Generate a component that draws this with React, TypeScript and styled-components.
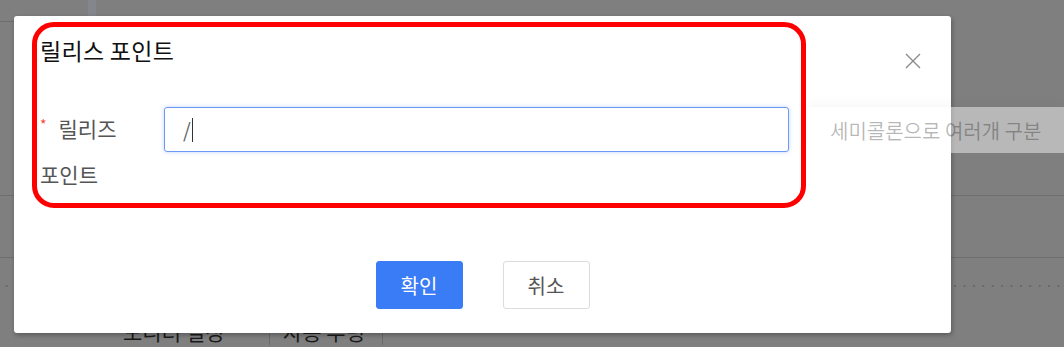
import { FunctionComponent } from "react";
import styled, { createGlobalStyle } from "styled-components";

const GlobalStyle = createGlobalStyle`
  html, body {
    margin: 0;
    padding: 0;
    background: #7f7f7f;
  }
  body {
    font-family: "Noto Sans CJK KR", "Noto Sans", sans-serif;
  }
`;

const App: FunctionComponent = () => {
  return (
    <>
      <GlobalStyle />
      <Screen>
        <BackPage>
          <TopRow>
            <TopLeftCell />
            <TopDivider />
          </TopRow>
          <Rule $top={173} />
          <Rule $top={61} />
          <DottedRule />
          <BottomTabs>
            <BottomTab $width={160}>모니터 설정</BottomTab>
            <BottomTab $width={113}>자동 부팅</BottomTab>
          </BottomTabs>
        </BackPage>

        <Dialog>
          <Header>
            <Title>릴리스 포인트</Title>
            <CloseButton aria-label="닫기">
              <svg width="16" height="16" viewBox="0 0 16 16">
                <path d="M1 1 L15 15 M15 1 L1 15" stroke="#8a8a8a" strokeWidth="1.4" fill="none" />
              </svg>
            </CloseButton>
          </Header>

          <FormRow>
            <Label>
              <Required>*</Required>릴리즈 포인트
            </Label>
            <InputBox>
              /<Caret />
            </InputBox>
            <Hint>세미콜론으로 여러개 구분</Hint>
          </FormRow>

          <Footer>
            <Button $primary>확인</Button>
            <Button>취소</Button>
          </Footer>

          <Highlight />
        </Dialog>
      </Screen>
    </>
  );
};

const Screen = styled.div`
  position: relative;
  width: 1064px;
  height: 347px;
  overflow: hidden;
  background: #7f7f7f;
`;

const BackPage = styled.div`
  display: flex;
  flex-direction: column;
`;

const TopRow = styled.div`
  display: flex;
  height: 22px;
`;

const TopLeftCell = styled.div`
  width: 88px;
  border-bottom: 1px solid #6e6e6e;
`;

const TopDivider = styled.div`
  width: 8px;
  background: #83878d;
`;

const Rule = styled.div<{ $top: number }>`
  margin-top: ${p => p.$top}px;
  border-top: 1px solid #6f6f6f;
`;

const DottedRule = styled.div`
  margin-top: 27px;
  height: 2px;
  background-image: radial-gradient(circle, #696969 1px, transparent 1.2px);
  background-size: 9.4px 2px;
  background-position: 2px 0;
`;

const BottomTabs = styled.div`
  display: flex;
  margin-top: 30px;
  padding-left: 110px;
`;

const BottomTab = styled.div<{ $width: number }>`
  width: ${p => p.$width}px;
  padding-left: 13px;
  box-sizing: border-box;
  font-size: 21px;
  line-height: 28px;
  color: #1a1a1a;
  border-right: 1px solid #6a6a6a;
  white-space: nowrap;
`;

const Dialog = styled.div`
  position: absolute;
  left: 14px;
  top: 16px;
  width: 937px;
  height: 317px;
  box-sizing: border-box;
  background: #ffffff;
  border-radius: 3px;
  box-shadow: 1px 2px 5px rgba(0, 0, 0, 0.3);
  padding: 20px 30px 24px 26px;
  display: flex;
  flex-direction: column;
`;

const Header = styled.div`
  display: flex;
  justify-content: space-between;
  align-items: flex-start;
  height: 28px;
`;

const Title = styled.div`
  font-size: 23px;
  line-height: 28px;
  color: #111111;
  font-weight: 400;
  letter-spacing: 0.3px;
`;

const CloseButton = styled.div`
  width: 16px;
  height: 16px;
  margin-top: 17px;
  display: flex;
`;

const FormRow = styled.div`
  display: flex;
  align-items: flex-start;
  margin-top: 41px;
  width: 1024px;
  flex-shrink: 0;
`;

const Label = styled.div`
  width: 124px;
  padding-right: 14px;
  box-sizing: border-box;
  flex-shrink: 0;
  font-size: 21px;
  line-height: 46px;
  color: #555555;
  word-break: keep-all;
`;

const Required = styled.span`
  display: inline-block;
  color: #f5483b;
  font-size: 14px;
  line-height: 14px;
  margin-right: 12px;
  vertical-align: top;
  margin-top: 12px;
`;

const InputBox = styled.div`
  width: 625px;
  height: 45px;
  margin-top: 2px;
  flex-shrink: 0;
  box-sizing: border-box;
  border: 1px solid #6a9af3;
  border-radius: 3px;
  box-shadow: 0 0 4px rgba(80, 130, 240, 0.35);
  padding-left: 18px;
  display: flex;
  align-items: center;
  font-size: 20px;
  color: #666666;
`;

const Caret = styled.span`
  display: inline-block;
  width: 1px;
  height: 24px;
  margin-left: 1px;
  background: #333333;
`;

const Hint = styled.div`
  margin-left: 19px;
  margin-top: 2px;
  width: 256px;
  height: 46px;
  flex-shrink: 0;
  box-sizing: border-box;
  padding-left: 22px;
  display: flex;
  align-items: center;
  background: rgba(255, 255, 255, 0.45);
  box-shadow: 0 -6px 8px rgba(0, 0, 0, 0.025);
  font-size: 20px;
  color: rgba(0, 0, 0, 0.28);
  white-space: nowrap;
`;

const Footer = styled.div`
  display: flex;
  justify-content: center;
  gap: 40px;
  margin-top: auto;
  padding-left: 4px;
`;

const Button = styled.div<{ $primary?: boolean }>`
  width: 87px;
  height: 48px;
  box-sizing: border-box;
  border-radius: 3px;
  display: flex;
  align-items: center;
  justify-content: center;
  font-size: 20px;
  border: 1px solid ${p => (p.$primary ? "#3a7bf6" : "#dcdcdc")};
  background: ${p => (p.$primary ? "#3a7bf6" : "#ffffff")};
  color: ${p => (p.$primary ? "#ffffff" : "#555555")};
`;

const Highlight = styled.div`
  position: absolute;
  left: 18px;
  top: 6px;
  width: 774px;
  height: 186px;
  box-sizing: border-box;
  border: 5px solid #ff0000;
  border-radius: 22px;
  pointer-events: none;
`;

export default App;
